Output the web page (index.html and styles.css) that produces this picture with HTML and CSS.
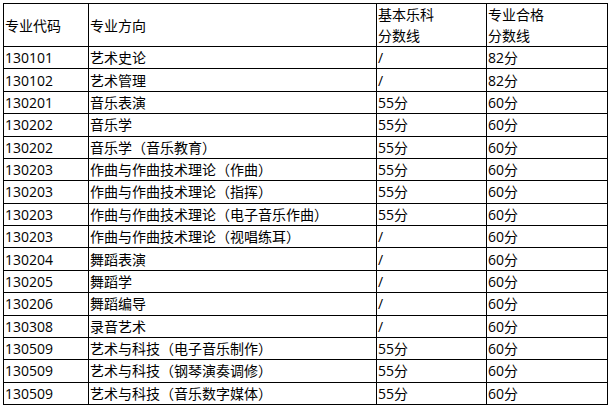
FILE: index.html
```html
<!DOCTYPE html>
<html lang="zh">
<head>
<meta charset="utf-8">
<title>专业分数线</title>
<link rel="stylesheet" href="styles.css">
</head>
<body>
<table class="score-table">
  <colgroup>
    <col class="c-code">
    <col class="c-name">
    <col class="c-base">
    <col class="c-pass">
  </colgroup>
  <tr class="head">
    <td class="mid">专业代码</td>
    <td class="mid">专业方向</td>
    <td class="top">基本乐科<br>分数线</td>
    <td class="top">专业合格<br>分数线</td>
  </tr>
  <tr><td>130101</td><td>艺术史论</td><td>/</td><td>82分</td></tr>
  <tr><td>130102</td><td>艺术管理</td><td>/</td><td>82分</td></tr>
  <tr><td>130201</td><td>音乐表演</td><td>55分</td><td>60分</td></tr>
  <tr><td>130202</td><td>音乐学</td><td>55分</td><td>60分</td></tr>
  <tr><td>130202</td><td>音乐学（音乐教育）</td><td>55分</td><td>60分</td></tr>
  <tr><td>130203</td><td>作曲与作曲技术理论（作曲）</td><td>55分</td><td>60分</td></tr>
  <tr><td>130203</td><td>作曲与作曲技术理论（指挥）</td><td>55分</td><td>60分</td></tr>
  <tr><td>130203</td><td>作曲与作曲技术理论（电子音乐作曲）</td><td>55分</td><td>60分</td></tr>
  <tr><td>130203</td><td>作曲与作曲技术理论（视唱练耳）</td><td>/</td><td>60分</td></tr>
  <tr><td>130204</td><td>舞蹈表演</td><td>/</td><td>60分</td></tr>
  <tr><td>130205</td><td>舞蹈学</td><td>/</td><td>60分</td></tr>
  <tr><td>130206</td><td>舞蹈编导</td><td>/</td><td>60分</td></tr>
  <tr><td>130308</td><td>录音艺术</td><td>/</td><td>60分</td></tr>
  <tr><td>130509</td><td>艺术与科技（电子音乐制作）</td><td>55分</td><td>60分</td></tr>
  <tr><td>130509</td><td>艺术与科技（钢琴演奏调修）</td><td>55分</td><td>60分</td></tr>
  <tr><td>130509</td><td>艺术与科技（音乐数字媒体）</td><td>55分</td><td>60分</td></tr>
</table>
</body>
</html>
```

FILE: styles.css
```css
html, body {
  background: #ffffff;
}
body {
  margin: 3px;
  font-family: "Open Sans", "Noto Sans CJK SC", sans-serif;
  font-size: 14px;
  color: #000000;
}
.score-table {
  border-collapse: collapse;
  table-layout: fixed;
  width: 604px;
}
.c-code { width: 85px; }
.c-name { width: 288px; }
.c-base { width: 110px; }
.c-pass { width: 121px; }
.score-table tr {
  height: 22.375px;
}
.score-table td {
  border: 1px solid #000000;
  padding: 1px 0 0 1px;
  line-height: 18px;
  vertical-align: middle;
  white-space: nowrap;
  overflow: hidden;
}
.score-table tr.head {
  height: 43px;
}
.score-table tr.head td {
  line-height: 21px;
  padding-top: 0;
}
.score-table tr.head td.top {
  vertical-align: top;
}
```
